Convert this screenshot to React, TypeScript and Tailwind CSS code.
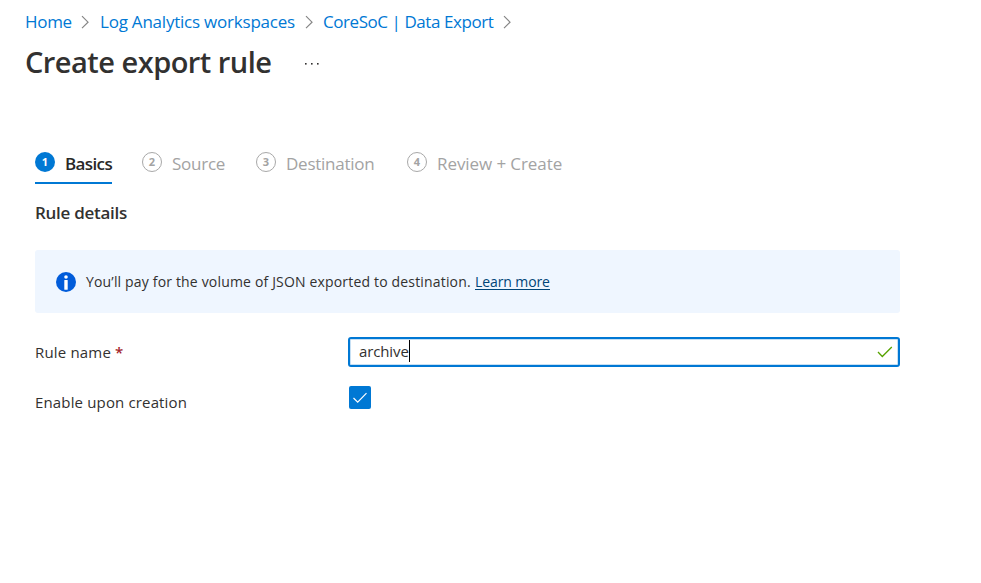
import React from 'react';

function Chevron() {
  return (
    <svg className="block shrink-0" width="9" height="14" viewBox="0 0 9 14" fill="none">
      <path d="M1 1.2L7 7.2L1 13.2" stroke="#858585" strokeWidth="1.2" />
    </svg>
  );
}

function Badge({ n, active }: { n: number; active?: boolean }) {
  return (
    <span
      className={
        'flex h-5 w-5 shrink-0 items-center justify-center rounded-full pb-px text-[11px] leading-none font-bold ' +
        (active ? 'bg-[#0078d4] text-white' : 'border border-[#a8a8a8] text-[#a3a3a3]')
      }
    >
      {n}
    </span>
  );
}

export default function App() {
  return (
    <div className="h-[583px] w-[981px] overflow-hidden bg-white font-['Open_Sans','Noto_Sans',sans-serif] text-[#323130]">
      <nav className="flex h-6 items-center pl-[25px] pt-[1px] mt-[9px] text-[17px] leading-6 whitespace-nowrap text-[#0078d4]">
        <a className="w-[56px] tracking-[-0.3px]">Home</a>
        <Chevron />
        <a className="ml-[10px] w-[205px] tracking-[-0.22px]">Log Analytics workspaces</a>
        <Chevron />
        <a className="ml-[9px] w-[184px] tracking-[-0.44px]">CoreSoC | Data Export</a>
        <span className="-ml-1"><Chevron /></span>
      </nav>

      <header className="mt-[9px] flex h-10 items-center pl-[25px]">
        <h1 className="w-[280px] text-[29px] leading-10 font-semibold tracking-[-0.52px] whitespace-nowrap">Create export rule</h1>
        <svg className="mt-[4px] block" width="14" height="2" viewBox="0 0 14 2" fill="#323130">
          <rect width="1.6" height="1.6" />
          <rect x="6" width="1.6" height="1.6" />
          <rect x="12" width="1.6" height="1.6" />
        </svg>
      </header>

      <div className="mt-[70px] flex h-8 pl-[35px] text-[17px] leading-6 whitespace-nowrap text-[#a3a3a3]">
        <div className="mr-[30px] flex w-[77px] border-b-2 border-[#0078d4]">
          <Badge n={1} active />
          <span className="ml-[10px] font-semibold tracking-[-0.62px] text-[#292827]">Basics</span>
        </div>
        <div className="flex w-[114px]">
          <Badge n={2} />
          <span className="ml-[10px] tracking-[-0.25px]">Source</span>
        </div>
        <div className="flex w-[151px]">
          <Badge n={3} />
          <span className="ml-[10px] tracking-[-0.25px]">Destination</span>
        </div>
        <div className="flex">
          <Badge n={4} />
          <span className="ml-[10px] tracking-[-0.08px]">Review + Create</span>
        </div>
      </div>

      <main className="w-[900px] pl-[35px]">
        <h2 className="mt-[17px] h-6 text-[17px] leading-6 font-semibold tracking-[-0.28px] whitespace-nowrap">Rule details</h2>

        <div className="mt-[25px] flex h-[63px] items-center rounded-[3px] bg-[#eff6ff] pl-[21px] text-[14px] whitespace-nowrap">
          <svg className="block shrink-0" width="20" height="20" viewBox="0 0 20 20">
            <circle cx="10" cy="10" r="10" fill="#015cda" />
            <circle cx="10" cy="5" r="1.8" fill="#fff" />
            <rect x="8.3" y="8" width="3.4" height="9.7" rx="0.5" fill="#fff" />
          </svg>
          <span className="ml-[10px] w-[389px] tracking-[0.17px]">You’ll pay for the volume of JSON exported to destination.</span>
          <a className="h-[17px] border-b border-[#004578] leading-[18px] tracking-[-0.1px] text-[#004578]">Learn more</a>
        </div>

        <div className="mt-[24px] flex h-[30px]">
          <label className="w-[313px] text-[15px] leading-[31px] tracking-[0.18px] whitespace-nowrap">
            Rule name <span className="font-semibold text-[#a4262c]">*</span>
          </label>
          <div className="flex w-[552px] items-center justify-between rounded-[3px] border-2 border-[#0078d4] pl-[9px] pr-[5px] shadow-[inset_0_0_0_1px_#c7e0f4]">
            <span className="mb-[3px] flex items-center text-[15px] leading-[22px] tracking-[-0.12px] whitespace-nowrap">
              archive
              <span className="h-[22px] w-px bg-black" />
            </span>
            <svg className="block" width="16" height="12" viewBox="0 0 16 12" fill="none">
              <path d="M1 6L5.3 10.5L14.8 1" stroke="#57a300" strokeWidth="1.3" />
            </svg>
          </div>
        </div>

        <div className="mt-[19px] flex h-8">
          <label className="w-[314px] text-[15px] leading-[33px] tracking-[0.15px] whitespace-nowrap">Enable upon creation</label>
          <span className="flex h-[23px] w-[22px] items-center justify-center rounded-[2px] bg-[#0078d4]">
            <svg className="block" width="16" height="12" viewBox="0 0 16 12" fill="none">
              <path d="M1.5 6L5.7 10.2L14.5 1.2" stroke="#fff" strokeWidth="1.2" />
            </svg>
          </span>
        </div>
      </main>
    </div>
  );
}
